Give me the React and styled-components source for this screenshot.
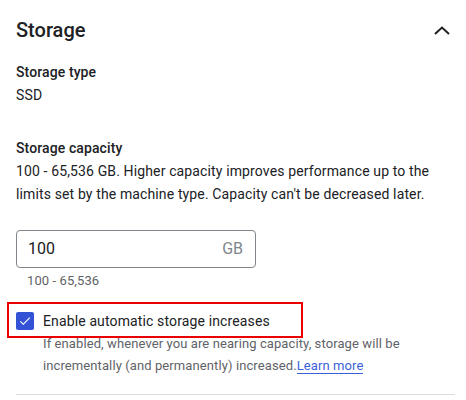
import React from 'react';
import styled, { createGlobalStyle } from 'styled-components';

const GlobalStyle = createGlobalStyle`
  body {
    margin: 0;
    background: #ffffff;
    font-family: Roboto, "Liberation Sans", sans-serif;
    color: #202124;
  }
`;

const Panel = styled.section`
  width: 466px;
  height: 400px;
  box-sizing: border-box;
  padding: 16px 11px 0 16px;
  overflow: hidden;
`;

const Header = styled.div`
  display: flex;
  align-items: center;
  justify-content: space-between;
  height: 28px;
`;

const Title = styled.h2`
  margin: 0;
  font-size: 20px;
  font-weight: 500;
  line-height: 28px;
`;

const Chevron = styled.button`
  display: flex;
  align-items: center;
  justify-content: center;
  width: 24px;
  height: 24px;
  padding: 0;
  border: none;
  background: none;
  margin-right: 1px;
`;

const Field = styled.div`
  display: flex;
  flex-direction: column;
  margin-top: ${p => p.$top}px;
`;

const Label = styled.div`
  font-size: 14px;
  font-weight: 500;
  line-height: 24px;
  letter-spacing: 0.1px;
`;

const Value = styled.div`
  font-size: 14px;
  line-height: 23.5px;
  letter-spacing: 0.13px;
  padding-right: 18px;
`;

const InputBox = styled.div`
  display: flex;
  align-items: center;
  justify-content: space-between;
  width: 240px;
  height: 38px;
  box-sizing: border-box;
  margin-top: 23px;
  padding: 0 12px 0 11px;
  border: 1px solid #80868b;
  border-radius: 4px;
  font-size: 16px;
`;

const Suffix = styled.span`
  color: #80868b;
  font-size: 16px;
`;

const Hint = styled.div`
  padding-left: 11px;
  margin-top: 4px;
  font-size: 13px;
  line-height: 18px;
  letter-spacing: 0.1px;
  color: #5f6368;
`;

const Highlight = styled.div`
  display: flex;
  align-items: center;
  gap: 9px;
  width: 296px;
  height: 36px;
  box-sizing: border-box;
  margin: 12px 0 0 -9px;
  padding: 3px 0 0 7px;
  border: 2px solid #ea0000;
`;

const Check = styled.span`
  display: flex;
  align-items: center;
  justify-content: center;
  width: 18px;
  height: 18px;
  border-radius: 2px;
  background: #3352d6;
`;

const CheckLabel = styled.span`
  font-size: 14px;
  line-height: 24px;
  letter-spacing: 0.13px;
`;

const Helper = styled.p`
  margin: -5px 0 0;
  padding-left: 27px;
  padding-right: 40px;
  font-size: 13px;
  line-height: 22px;
  letter-spacing: 0.1px;
  color: #5f6368;
`;

const Link = styled.a`
  color: #3b5fd9;
  text-decoration: none;
  border-bottom: 1px solid #3b5fd9;
`;

const Divider = styled.hr`
  margin: 17px 0 0;
  border: none;
  border-top: 1px solid #dadce0;
`;

export default function App() {
  return (
    <>
      <GlobalStyle />
      <Panel>
        <Header>
          <Title>Storage</Title>
          <Chevron aria-label="Collapse">
            <svg width="24" height="24" viewBox="0 0 24 24">
              <polyline points="5,16 12,9.5 19,16" fill="none" stroke="#202124" strokeWidth="2" />
            </svg>
          </Chevron>
        </Header>
        <Field $top={16}>
          <Label>Storage type</Label>
          <Value>SSD</Value>
        </Field>
        <Field $top={28}>
          <Label>Storage capacity</Label>
          <Value>
            100 - 65,536 GB. Higher capacity improves performance up to the limits set by the
            machine type. Capacity can't be decreased later.
          </Value>
          <InputBox>
            <span>100</span>
            <Suffix>GB</Suffix>
          </InputBox>
          <Hint>100 - 65,536</Hint>
          <Highlight>
            <Check>
              <svg width="14" height="14" viewBox="0 0 24 24">
                <path d="M9 16.17 4.83 12l-1.42 1.41L9 19 21 7l-1.41-1.41z" fill="#ffffff" />
              </svg>
            </Check>
            <CheckLabel>Enable automatic storage increases</CheckLabel>
          </Highlight>
          <Helper>
            If enabled, whenever you are nearing capacity, storage will be incrementally (and
            permanently) increased.<Link href="#">Learn more</Link>
          </Helper>
          <Divider />
        </Field>
      </Panel>
    </>
  );
}
